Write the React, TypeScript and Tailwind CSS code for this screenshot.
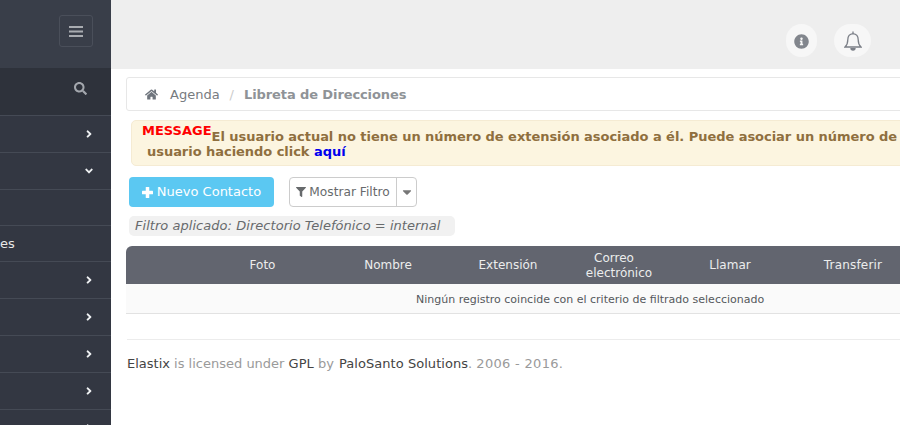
import React from "react";
import { FaHome, FaSearch, FaAngleRight, FaAngleDown, FaInfoCircle, FaFilter, FaCaretDown } from "react-icons/fa";

const rowCls = "flex items-center border-b border-[#454a55] text-white box-border shrink-0";

function Row({ h, icon, text }: { h: string; icon?: "r" | "d"; text?: string }) {
  return (
    <div className={`${rowCls} ${h} ${text ? "justify-start" : "justify-end pr-[16px]"}`}>
      {text && <span className="text-[13px] text-[#e8e8e8]">{text}</span>}
      {icon === "r" && <FaAngleRight className="text-[12px] text-[#eef0f2]" />}
      {icon === "d" && <FaAngleDown className="text-[12px] text-[#eef0f2]" />}
    </div>
  );
}

export default function App() {
  return (
    <div className="flex h-[425px] w-[900px] overflow-hidden bg-white font-['DejaVu_Sans',sans-serif] text-[13px] text-[#676a6c]">
      <aside className="w-[111px] shrink-0 flex flex-col bg-[#333742] overflow-hidden">
        <div className="h-[68px] shrink-0 flex items-start justify-end pr-[18px] pt-[15px] bg-[#393e49]">
          <div className="w-[34px] h-[32px] border border-[#4a4f5a] rounded-[3px] flex items-center justify-center">
            <svg width="14" height="11" viewBox="0 0 14 11" className="text-[#a9acb1]">
              <rect x="0" y="0" width="14" height="2" fill="currentColor" />
              <rect x="0" y="4.5" width="14" height="2" fill="currentColor" />
              <rect x="0" y="9" width="14" height="2" fill="currentColor" />
            </svg>
          </div>
        </div>
        <div className="h-[48px] shrink-0 flex items-center justify-end pr-[24px] pb-[6px] bg-[#2e323b] border-b border-[#454a55]">
          <FaSearch className="text-[13px] text-[#a3a7ad]" />
        </div>
        <Row h="h-[37px]" icon="r" />
        <Row h="h-[37px]" icon="d" />
        <div className="h-[36px] shrink-0 border-b border-[#454a55]" />
        <Row h="h-[36px]" text="es" />
        <Row h="h-[37px]" icon="r" />
        <Row h="h-[37px]" icon="r" />
        <Row h="h-[37px]" icon="r" />
        <Row h="h-[37px]" icon="r" />
        <Row h="h-[37px]" icon="r" />
      </aside>

      <main className="flex-1 min-w-0 overflow-hidden flex flex-col">
        <header className="h-[69px] shrink-0 bg-[#eeeeee] flex items-start justify-end gap-[17px] pr-[29px] pt-[24px]">
          <div className="w-[31px] h-[33px] rounded-full bg-[#f7f7f7] flex items-center justify-center pt-[1px]">
            <FaInfoCircle className="text-[15px] text-[#82868d]" />
          </div>
          <div className="w-[37px] h-[33px] rounded-full bg-[#f7f7f7] flex items-center justify-center">
            <svg width="18" height="20" viewBox="0 0 18 20" fill="none" className="text-[#7b7f87]">
              <path
                d="M9 .5V2.6C5.8 2.9 3.8 5.4 3.8 8.8 3.8 12.8 2.8 14.4 1 16H17C15.2 14.4 14.2 12.8 14.2 8.8 14.2 5.4 12.2 2.9 9 2.6"
                stroke="currentColor"
                strokeWidth="1.3"
              />
              <path d="M6.3 17H11.7A2.7 2.7 0 0 1 6.3 17Z" fill="currentColor" />
            </svg>
          </div>
        </header>

        <div className="pl-[15px] w-[960px]">
          <nav className="mt-[8px] h-[34px] border border-[#e7e7e7] rounded-l-[3px] bg-white flex items-center pl-[18px] pt-[1px] text-[13px]">
            <FaHome className="text-[13px] text-[#6f757d]" />
            <span className="ml-[12px] text-[#777b80]">Agenda</span>
            <span className="ml-[10px] text-[#cccccc]">/</span>
            <span className="ml-[10px] font-bold tracking-[-0.1px] text-[#8f9397]">Libreta de Direcciones</span>
          </nav>

          <div className="mt-[9px] ml-[5px] h-[46px] border border-[#f5ebd3] rounded-l-[5px] bg-[#fcf5e0] font-bold text-[13px] tracking-[-0.04px] text-[#8f6f3e] pl-[10px] leading-[17px] whitespace-nowrap overflow-hidden">
            <div className="h-[23px] flex items-start pt-[1px]">
              <span className="text-[#ff0000] tracking-normal leading-[17px]">MESSAGE</span>
              <span className="pt-[6px]">El usuario actual no tiene un número de extensión asociado a él. Puede asociar un número de extensión a este</span>
            </div>
            <div className="pl-[5px] -mt-[1px]">
              usuario haciendo click <a className="text-[#0000ee]">aquí</a>
            </div>
          </div>

          <div className="mt-[11px] ml-[3px] flex items-start">
            <button className="w-[145px] h-[30px] rounded-[4px] bg-[#5bc8f2] text-white flex items-center justify-center gap-[4px] text-[13px]">
              <svg width="11" height="11" viewBox="0 0 11 11" fill="currentColor">
                <rect x="3.75" y="0" width="3.5" height="11" rx="0.5" />
                <rect x="0" y="3.75" width="11" height="3.5" rx="0.5" />
              </svg>
              Nuevo Contacto
            </button>
            <div className="ml-[15px] h-[30px] w-[128px] border border-[#cccccc] rounded-[4px] flex items-center text-[12.2px] text-[#676a6c]">
              <div className="w-[107px] h-full border-r border-[#cccccc] flex items-center justify-center gap-[3px]">
                <FaFilter className="text-[10px]" />
                Mostrar Filtro
              </div>
              <div className="flex-1 flex items-center justify-center">
                <FaCaretDown className="text-[14px] text-[#777]" />
              </div>
            </div>
          </div>

          <div className="mt-[9px] ml-[3px] w-[326px] h-[20px] rounded-[5px] bg-[#f1f1f1] pl-[6px] italic text-[13px] tracking-[0.04px] leading-[20px] text-[#676a6c]">
            Filtro aplicado: Directorio Telefónico = internal
          </div>

          <div className="mt-[10px] h-[38px] rounded-t-[6px] bg-[#62656f] text-[#eceded] text-[12px] leading-[15px] grid grid-cols-[79px_115px_136px_104px_124px_92px_154px] items-center text-center">
            <div />
            <div>Foto</div>
            <div>Nombre</div>
            <div>Extensión</div>
            <div className="pr-[6px] pt-[1px] flex flex-col items-center">
              <span className="pr-[10px]">Correo</span>
              <span>electrónico</span>
            </div>
            <div>Llamar</div>
            <div className="tracking-[0.2px]">Transferir</div>
          </div>
          <div className="h-[30px] w-full bg-[#fafafa] border-b border-[#e2e2e2] text-[11px] text-[#55585c] flex items-center pl-[290px] pt-[4px]">
            Ningún registro coincide con el criterio de filtrado seleccionado
          </div>
        </div>

        <footer className="ml-[16px] mt-[25px] border-t border-[#ececec] pt-[14px] text-[13px] text-[#9a9a9a] w-[900px]">
          <span className="text-[#444]">Elastix</span> is licensed under <span className="text-[#444]">GPL</span> by <span className="ml-[1px] text-[#444] tracking-[0.05px]">PaloSanto Solutions</span>. <span className="tracking-[0.3px]">2006 - 2016.</span>
        </footer>
      </main>
    </div>
  );
}
